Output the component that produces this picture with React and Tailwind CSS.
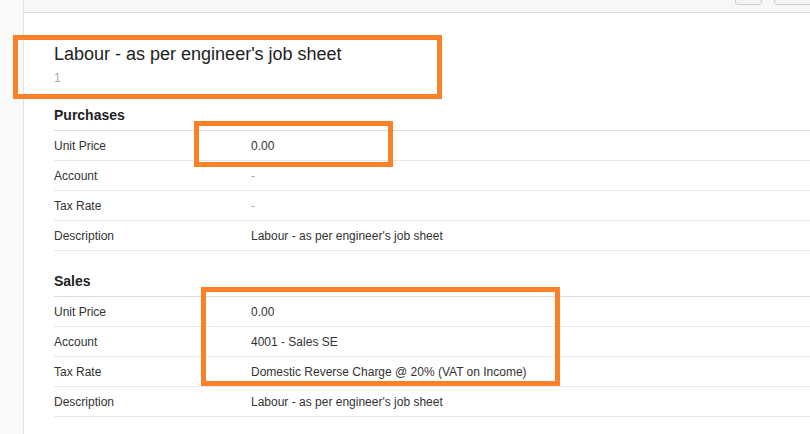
import React from "react";

const purchases = [
  { label: "Unit Price", value: "0.00" },
  { label: "Account", value: "-", muted: true },
  { label: "Tax Rate", value: "-", muted: true },
  { label: "Description", value: "Labour - as per engineer's job sheet" },
];

const sales = [
  { label: "Unit Price", value: "0.00" },
  { label: "Account", value: "4001 - Sales SE" },
  { label: "Tax Rate", value: "Domestic Reverse Charge @ 20% (VAT on Income)" },
  { label: "Description", value: "Labour - as per engineer's job sheet" },
];

const Section = ({ title, rows, className }) => (
  <div className={className}>
    {/* Section heading */}
    <div className="h-[30px] flex items-center border-b border-[#dcdcdc] text-[14px] font-bold text-[#222]">
      {title}
    </div>
    {rows.map((row) => (
      <div
        key={row.label}
        className="h-[30px] flex items-center border-b border-[#e8e8e8] text-[12px]"
      >
        <div className="w-[197px] text-[#333]">{row.label}</div>
        <div className={row.muted ? "text-[#aaa]" : "text-[#333]"}>
          {row.value}
        </div>
      </div>
    ))}
  </div>
);

const App = () => {
  return (
    <div
      className="relative w-[810px] h-[434px] overflow-hidden bg-white flex"
      style={{ fontFamily: '"Liberation Sans", Arial, sans-serif' }}
    >
      {/* Left gutter */}
      <div className="w-[24px] shrink-0 bg-[#f9f9f9] border-r border-[#e2e2e2]" />

      <div className="flex-1 flex flex-col">
        {/* Top toolbar */}
        <div className="h-[13px] bg-[#f7f7f7] border-b border-[#dedede] relative">
          <div className="absolute left-[711px] top-[-10px] w-[27px] h-[15px] rounded-[3px] border border-[#cfcfcf] bg-[#f3f3f3]" />
          <div className="absolute left-[750px] top-[-10px] w-[50px] h-[15px] rounded-[3px] border border-[#cfcfcf] bg-[#f3f3f3]" />
        </div>

        {/* Content */}
        <div className="pl-[30px] pt-[29px]">
          <div className="text-[18px] leading-[24px] text-[#222]">
            Labour - as per engineer's job sheet
          </div>
          <div className="mt-[4px] text-[12px] leading-[16px] text-[#aaa]">1</div>

          <Section title="Purchases" rows={purchases} className="mt-[15px]" />
          <Section title="Sales" rows={sales} className="mt-[16px]" />
        </div>
      </div>

      {/* Annotation boxes */}
      <div className="absolute left-[13px] top-[35px] w-[429px] h-[64px] border-[5px] border-[#fa8128]" />
      <div className="absolute left-[194px] top-[121px] w-[199px] h-[46px] border-[5px] border-[#fa8128]" />
      <div className="absolute left-[201px] top-[287px] w-[359px] h-[99px] border-[5px] border-[#fa8128]" />
    </div>
  );
};

export default App;
